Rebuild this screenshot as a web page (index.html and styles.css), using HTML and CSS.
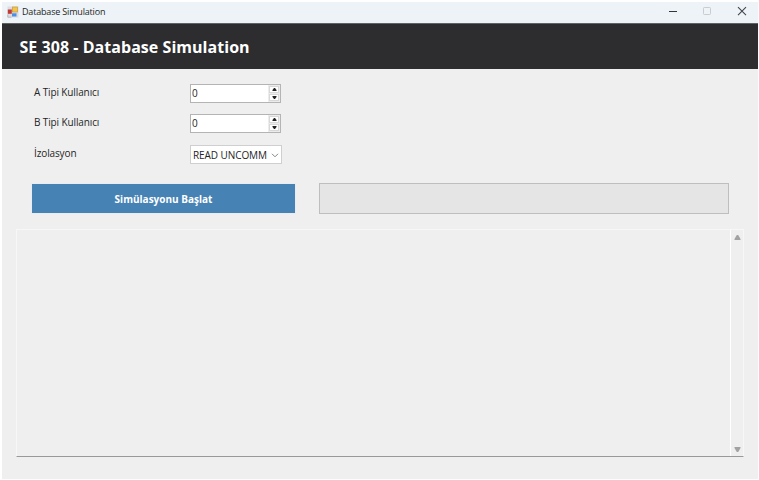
FILE: index.html
```html
<!DOCTYPE html>
<html lang="tr">
<head>
<meta charset="utf-8">
<title>Database Simulation</title>
<link rel="stylesheet" href="styles.css">
</head>
<body>
<div class="window">
  <div class="titlebar">
    <svg class="app-icon" width="12" height="12" viewBox="0 0 12 12">
      <rect x="0.5" y="0.5" width="11" height="11" fill="#dcdce0"/>
      <rect x="0.8" y="3.5" width="4" height="4.3" fill="#c23a34"/>
      <rect x="5.5" y="1" width="5" height="5" fill="#f2c548" stroke="#c99a3c" stroke-width=".7"/>
      <rect x="5" y="7.3" width="4.5" height="3.2" fill="#4d8fe6"/>
      <path d="M.8 8.5v2.7h3.7" fill="none" stroke="#b9b9bd"/>
    </svg>
    <span class="caption">Database Simulation</span>
    <svg class="controls" width="80" height="12" viewBox="0 0 80 12" fill="none">
      <path d="M1 5.5h8" stroke="#333639"/>
      <rect x="35.5" y="1.5" width="7" height="7" rx=".8" stroke="#c9cccf"/>
      <path d="M70 1.2l8 8M78 1.2l-8 8" stroke="#44474a" stroke-width="1.1"/>
    </svg>
  </div>
  <header class="banner"><h1>SE 308 - Database Simulation</h1></header>
  <main class="content">
    <div class="fields">
      <label>A Tipi Kullanıcı</label>
      <div class="spinner"><span>0</span><div class="steps"><i><svg width="5" height="3"><path d="M2 0h1l1.5 2v1h-4V2z"/></svg></i><i><svg width="5" height="3"><path d="M.5 0h4v1L3 3H2L.5 1z"/></svg></i></div></div>
      <label>B Tipi Kullanıcı</label>
      <div class="spinner"><span>0</span><div class="steps"><i><svg width="5" height="3"><path d="M2 0h1l1.5 2v1h-4V2z"/></svg></i><i><svg width="5" height="3"><path d="M.5 0h4v1L3 3H2L.5 1z"/></svg></i></div></div>
      <label>İzolasyon</label>
      <div class="combo"><span>READ UNCOMM</span><svg width="8" height="5" viewBox="0 0 8 5"><path d="M1 .8l3 3 3-3" fill="none" stroke="#858585"/></svg></div>
    </div>
    <div class="actions">
      <button class="start">Simülasyonu Başlat</button>
      <div class="progress"></div>
    </div>
    <div class="log">
      <div class="log-text"></div>
      <div class="scrollbar">
        <svg width="7" height="5"><path d="M2.8 0h1.4L6.5 4v1h-6V4z"/></svg>
        <svg width="7" height="5"><path d="M.5 0h6v1L4.2 5H2.8L.5 1z"/></svg>
      </div>
    </div>
  </main>
</div>
</body>
</html>
```
FILE: styles.css
```css
* { box-sizing: border-box; }
body {
  margin: 0;
  height: 480px;
  padding: 2px 1px 1px 2px;
  background: #fff;
  font-family: "Open Sans", "Noto Sans", sans-serif;
  font-size: 10px;
  color: #252525;
  overflow: hidden;
}
.window { height: 477px; background: #efefef; display: flex; flex-direction: column; }
.titlebar {
  height: 21px;
  display: flex;
  align-items: center;
  padding: 0 10px 1px 5px;
  background: #edf3f7;
}
.caption { margin-left: 3px; font-size: 9px; line-height: 12px; letter-spacing: -0.18px; }
.controls { margin-left: auto; }
.banner {
  height: 46px;
  border-top: 1px solid #606264;
  background: #2d2d30;
  padding-left: 17.5px;
}
h1 { margin: 0; font-size: 16px; line-height: 46px; font-weight: 700; letter-spacing: 0.04px; color: #fff; white-space: nowrap; }
.content { padding: 15px 14px 0; }
.fields {
  display: grid;
  grid-template-columns: 156px 92px;
  grid-template-rows: 19px 20px 19px;
  row-gap: 11px;
  margin-left: 18px;
}
label { line-height: 16px; letter-spacing: -0.12px; white-space: nowrap; }
.spinner {
  width: 91px;
  height: 19px;
  border: 1px solid #b4b4b4;
  background: #fff;
  display: flex;
  justify-content: space-between;
  line-height: 17px;
  padding-left: 1px;
}
.steps { width: 12px; background: #ececec; padding: 1px; display: grid; grid-template-rows: 7px 7px; gap: 1px; }
.steps i { background: #fff; border: 1px solid #d8d8d8; display: flex; align-items: center; justify-content: center; }
.steps svg { fill: #222; flex: none; }
.combo {
  height: 19px;
  border: 1px solid #cfcfcf;
  background: #fff;
  display: flex;
  align-items: center;
  justify-content: space-between;
  padding: 1px 2px 0;
  letter-spacing: -0.08px;
  white-space: nowrap;
}
.actions { display: flex; gap: 23px; margin: 19px 15px 0 15px; }
.start {
  width: 265px;
  height: 31px;
  padding: 0;
  border: 1px solid #e7edf2;
  background: #4682b4;
  color: #fff;
  font: 700 10px "Open Sans", "Noto Sans", sans-serif;
}
.progress { flex: 1; height: 31px; border: 1px solid #bebebe; background: #e5e5e5; }
.log {
  height: 228px;
  margin-top: 15px;
  border: 1px solid #f7f7f7;
  border-bottom-color: #999;
  display: flex;
}
.log-text { flex: 1; }
.scrollbar {
  width: 13px;
  border-left: 1px solid #fff;
  display: flex;
  flex-direction: column;
  justify-content: space-between;
  align-items: center;
  padding: 5px 0 4px 0;
  fill: #a2a2a2;
}
```
